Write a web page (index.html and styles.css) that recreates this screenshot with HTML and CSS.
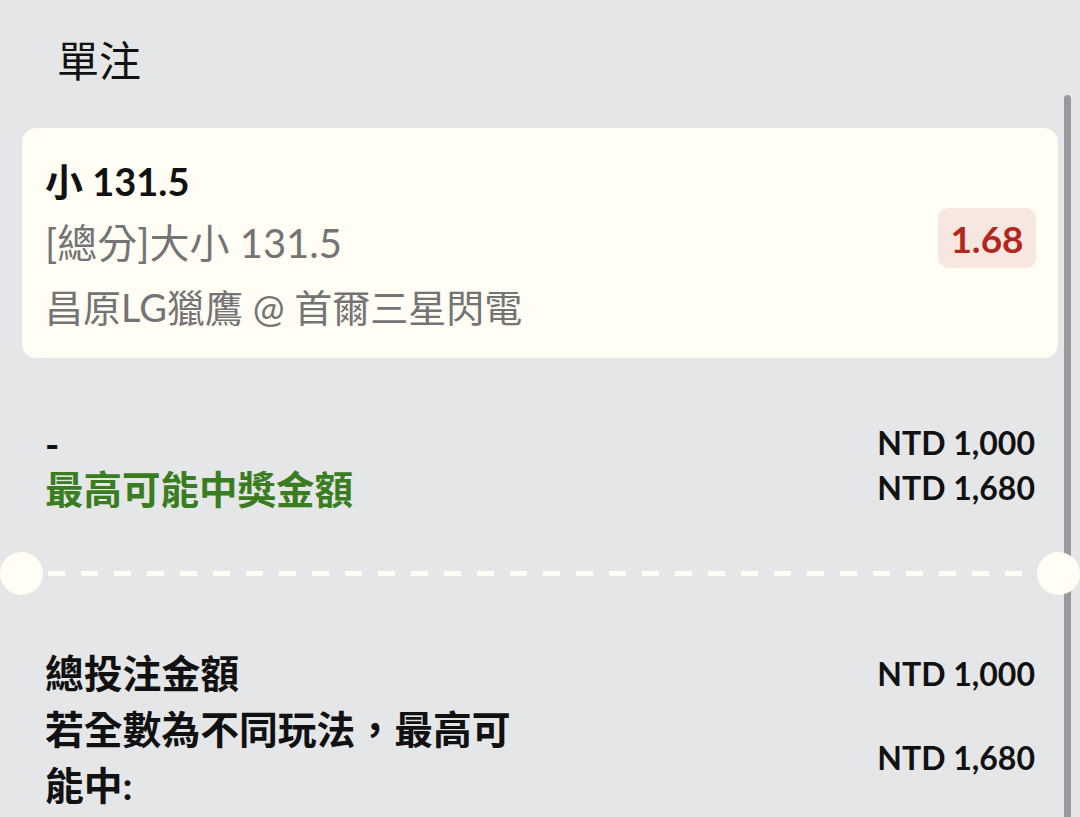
FILE: index.html
```html
<!DOCTYPE html>
<html lang="zh-Hant">
<head>
<meta charset="utf-8">
<title>單注</title>
<link rel="stylesheet" href="styles.css">
</head>
<body>
<div class="page">
  <header class="header"><h1 class="title">單注</h1></header>

  <section class="card">
    <div class="card-info">
      <div class="sel">小 131.5</div>
      <div class="market">[總分]大小 131.5</div>
      <div class="match">昌原LG獵鷹 @ 首爾三星閃電</div>
    </div>
    <div class="odds">1.68</div>
  </section>

  <section class="summary">
    <div class="sum-left">
      <div class="dash-line">-</div>
      <div class="win">最高可能中獎金額</div>
    </div>
    <div class="sum-right">
      <div class="amt">NTD 1,000</div>
      <div class="amt">NTD 1,680</div>
    </div>
  </section>

  <div class="divider">
    <span class="notch notch-left"></span>
    <span class="dashes"></span>
    <span class="notch notch-right"></span>
  </div>

  <section class="totals">
    <div class="t-label">總投注金額</div>
    <div class="t-amt">NTD 1,000</div>
    <div class="t-label t-wrap">若全數為不同玩法，最高可能中:</div>
    <div class="t-amt">NTD 1,680</div>
  </section>

  <div class="scrollbar"></div>
</div>
</body>
</html>
```

FILE: styles.css
```css
* { box-sizing: border-box; }

html, body {
  margin: 0;
  padding: 0;
  background: #e5e6e8;
}

body {
  font-family: "Lato", "Noto Sans CJK TC", sans-serif;
  color: #111;
  overflow: hidden;
}

.page {
  position: relative;
  width: 1080px;
  height: 817px;
  overflow: hidden;
}

.header {
  height: 128px;
  padding-left: 57px;
}

.title {
  margin: 0;
  font-family: "Noto Sans CJK TC", sans-serif;
  font-weight: 400;
  font-size: 42px;
  line-height: 118px;
  color: #111;
}

.card {
  margin: 0 22px;
  height: 230px;
  background: #fffdf4;
  border-radius: 14px;
  padding: 22px 22px 0 23px;
  display: flex;
  justify-content: space-between;
  align-items: flex-start;
}

.card-info {
  font-size: 38px;
}

.sel {
  font-weight: 700;
  line-height: 62px;
  color: #111;
}

.market {
  font-size: 40px;
  line-height: 63px;
  color: #747474;
}

.match {
  line-height: 64px;
  color: #747474;
}

.odds {
  margin-top: 58px;
  width: 98px;
  height: 60px;
  border-radius: 10px;
  background: #f8e7e0;
  color: #b2261d;
  font-family: "Lato", sans-serif;
  font-weight: 700;
  font-size: 37px;
  display: flex;
  align-items: center;
  justify-content: center;
}

.summary {
  margin-top: 64px;
  padding: 0 45px;
  display: flex;
  justify-content: space-between;
}

.sum-left {
  font-size: 38.5px;
  font-weight: 700;
}

.dash-line {
  line-height: 45px;
  color: #111;
}

.win {
  line-height: 45px;
  color: #3a7d20;
}

.sum-right {
  text-align: right;
  margin-top: -2px;
}

.amt {
  font-family: "Lato", sans-serif;
  font-weight: 700;
  font-size: 32px;
  line-height: 45px;
  color: #111;
}

.divider {
  position: relative;
  margin-top: 40px;
  height: 43px;
  display: flex;
  align-items: center;
  padding: 0 44px 0 48px;
}

.dashes {
  flex: 1;
  height: 5px;
  background: repeating-linear-gradient(90deg, #fffdf4 0 17px, transparent 17px 33px);
}

.notch {
  position: absolute;
  top: 0;
  width: 43px;
  height: 43px;
  border-radius: 50%;
  background: #fffdf4;
  z-index: 2;
}

.notch-left { left: 0; }
.notch-right { right: 0; }

.totals {
  margin-top: 50px;
  padding: 0 45px;
  display: grid;
  grid-template-columns: 480px 1fr;
  align-items: center;
}

.t-label {
  font-size: 38.8px;
  font-weight: 700;
  line-height: 56px;
  color: #111;
}

.t-amt {
  text-align: right;
  font-family: "Lato", sans-serif;
  font-weight: 700;
  font-size: 32px;
  color: #111;
}

.scrollbar {
  position: absolute;
  left: 1064px;
  top: 95px;
  width: 7px;
  height: 740px;
  border-radius: 4px;
  background: #9a9a9e;
  z-index: 1;
}
```
